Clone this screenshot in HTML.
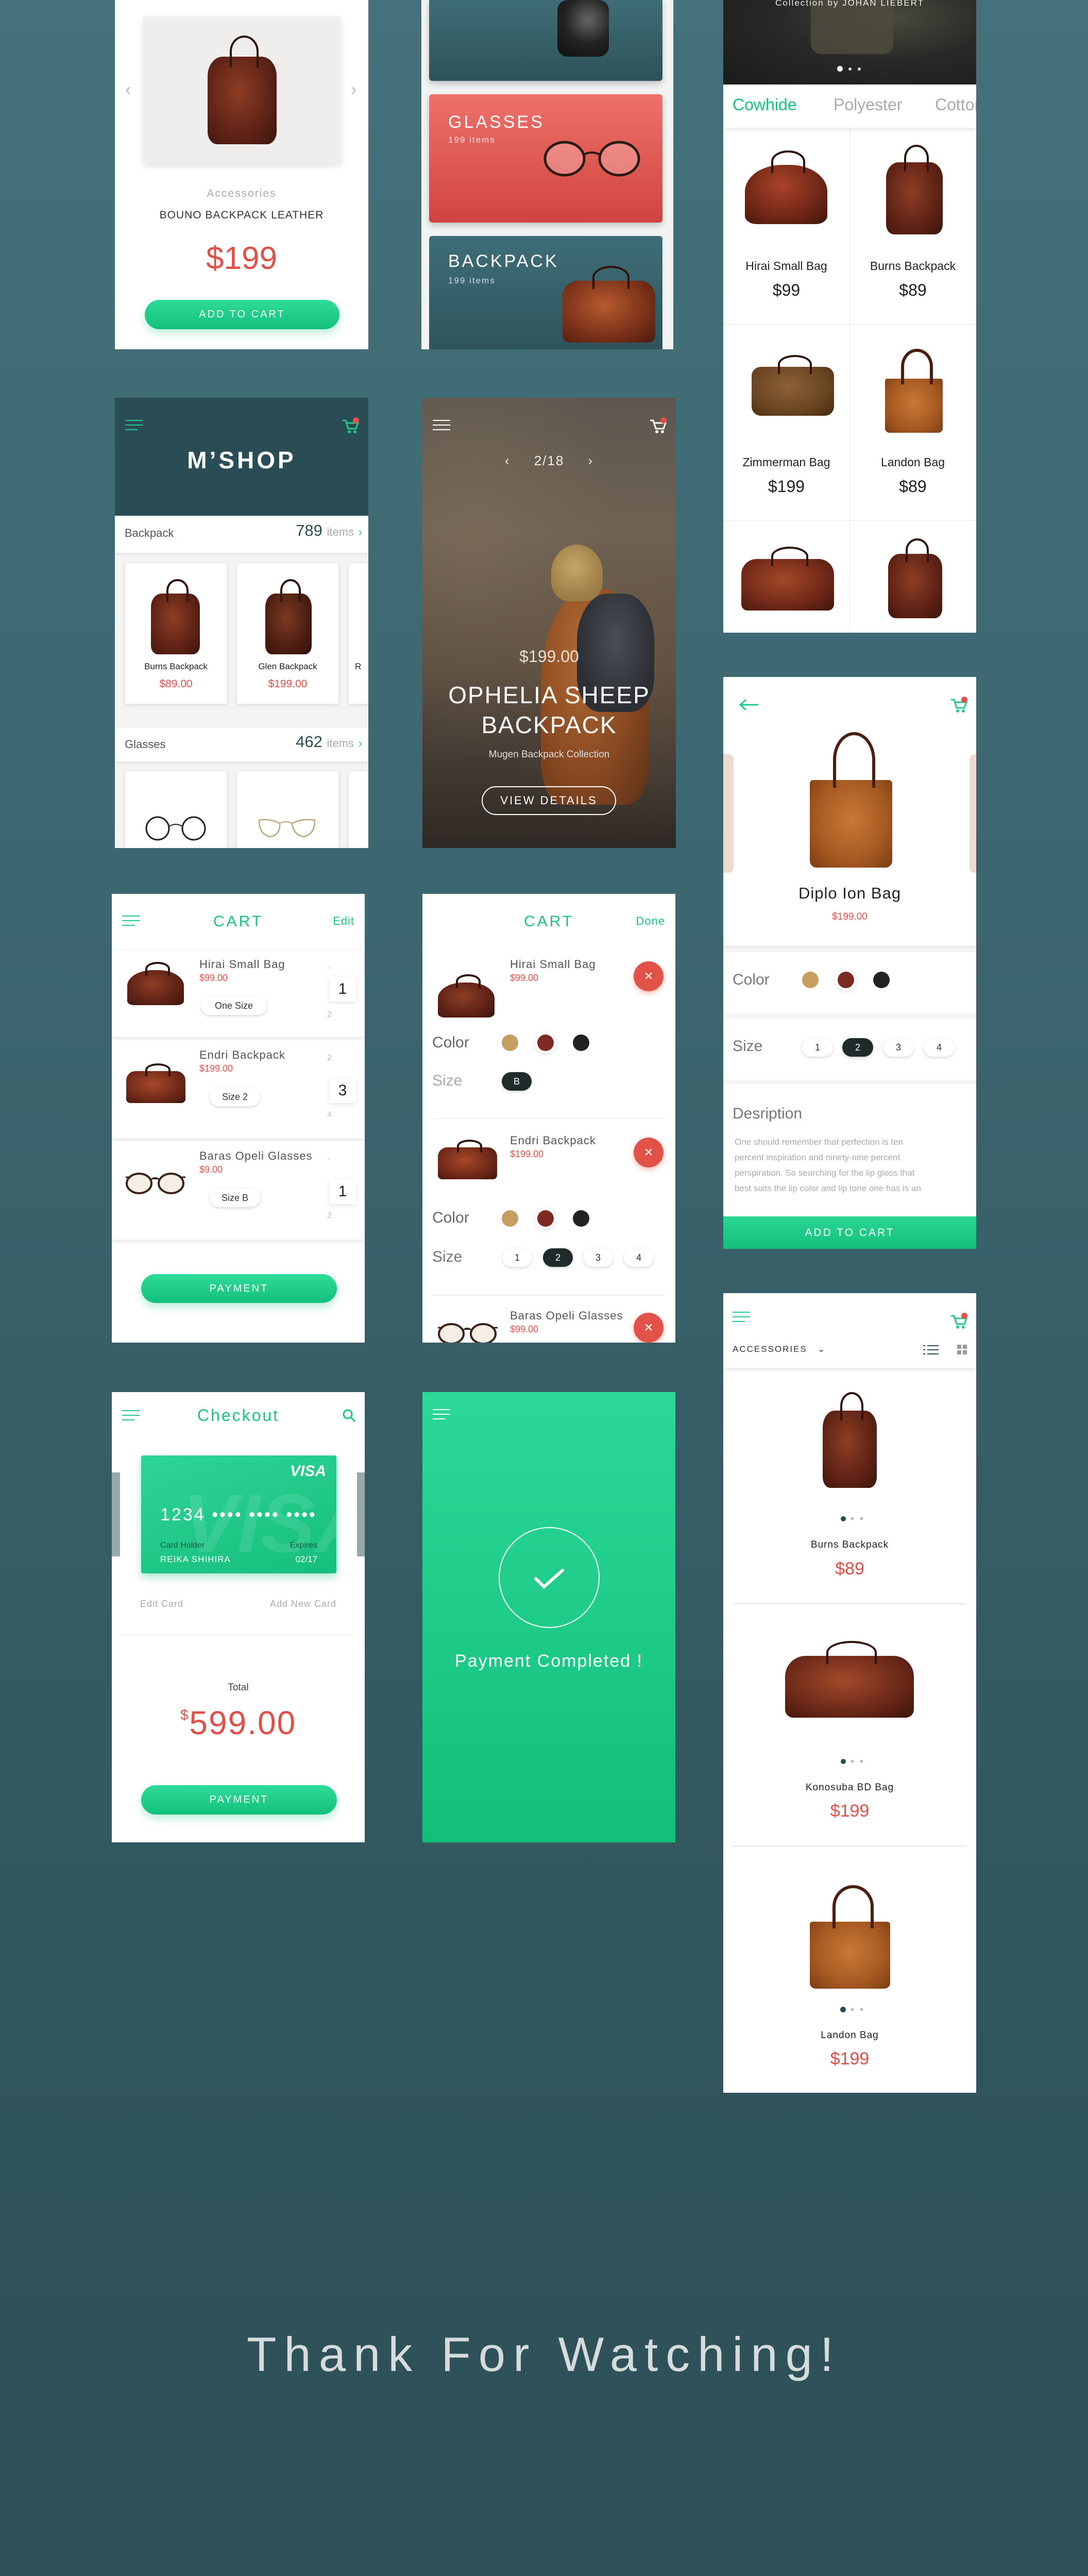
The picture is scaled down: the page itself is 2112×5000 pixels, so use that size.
<!DOCTYPE html>
<html><head><meta charset="utf-8">
<style>
*{margin:0;padding:0;box-sizing:border-box}
body{width:2112px;height:5000px;position:relative;overflow:hidden;font-family:"Liberation Sans",sans-serif;background:linear-gradient(180deg,#44717b 0%,#3c6670 35%,#33585f 70%,#2d4f58 100%)}
.p{position:absolute;background:#fff;overflow:hidden}
.t{position:absolute;white-space:nowrap}
.c{position:absolute;left:0;right:0;text-align:center;white-space:nowrap}
.bag{position:absolute;border-radius:22% 22% 14% 14%;background:radial-gradient(ellipse at 45% 40%,#8d3e24,#5e2216 60%,#3b150d)}
.bag:before{content:"";position:absolute;top:-24%;left:32%;width:36%;height:34%;border:4px solid #2e140c;border-bottom:none;border-radius:50% 50% 0 0}
.tote{position:absolute;border-radius:4% 4% 8% 8%;background:radial-gradient(ellipse at 50% 45%,#c77a35,#a65a22 60%,#7a3c15)}
.tote:before{content:"";position:absolute;top:-55%;left:28%;width:44%;height:60%;border:6px solid #4a1e10;border-bottom:none;border-radius:50% 50% 0 0}
.btn{position:absolute;border-radius:32px;background:linear-gradient(180deg,#2edb98,#12c07b);color:#fff;text-align:center;letter-spacing:3px;box-shadow:0 8px 16px rgba(30,200,130,.3)}
.hb{position:absolute;width:34px;height:22px}
.hb i{position:absolute;left:0;height:2px;background:#22c98c}
.hb i:nth-child(1){top:0;width:34px}.hb i:nth-child(2){top:9px;width:34px}.hb i:nth-child(3){top:18px;width:24px}
.pill{position:absolute;height:36px;border-radius:18px;background:#fff;box-shadow:0 2px 6px rgba(0,0,0,.18);text-align:center;line-height:36px;font-size:18px;color:#333}
.pill.d{background:#1f2a2a;color:#fff}
.sw{position:absolute;width:32px;height:32px;border-radius:50%}
.x{position:absolute;width:58px;height:58px;border-radius:50%;background:#e35249;color:#fff;text-align:center;line-height:58px;font-size:30px;box-shadow:0 4px 10px rgba(227,82,73,.4)}
.red{color:#e0504a}
.card{position:absolute;background:#fff;box-shadow:0 2px 8px rgba(0,0,0,.12)}
.dot{position:absolute;border-radius:50%}
</style></head><body>

<!-- Panel A -->
<div class="p" style="left:223px;top:0;width:492px;height:678px">
 <div style="position:absolute;left:55px;top:32px;width:383px;height:284px;background:#efeeec;box-shadow:0 6px 14px rgba(0,0,0,.12)"></div>
 <div class="bag" style="left:180px;top:110px;width:134px;height:170px"></div>
 <div class="t" style="left:20px;top:155px;font-size:34px;color:#bbb">‹</div>
 <div class="t" style="left:458px;top:155px;font-size:34px;color:#bbb">›</div>
 <div class="c" style="top:364px;font-size:21px;color:#aaa;letter-spacing:2px">Accessories</div>
 <div class="c" style="top:406px;font-size:21px;color:#333;letter-spacing:1px">BOUNO BACKPACK LEATHER</div>
 <div class="c red" style="top:466px;font-size:62px">$199</div>
 <div class="btn" style="left:58px;top:582px;width:378px;height:57px;line-height:57px;font-size:20px">ADD TO CART</div>
</div>

<!-- Panel B -->
<div class="p" style="left:818px;top:0;width:489px;height:678px;background:#f3f3f3">
 <div style="position:absolute;left:15px;top:0;width:453px;height:157px;border-radius:0 0 6px 6px;background:linear-gradient(180deg,#3f6d76,#2d5259);box-shadow:0 6px 12px rgba(0,0,0,.2)"></div>
 <div style="position:absolute;left:264px;top:0;width:100px;height:110px;border-radius:20px;background:radial-gradient(circle at 60% 35%,#666,#222 50%,#111)"></div>
 <div style="position:absolute;left:15px;top:183px;width:453px;height:249px;border-radius:6px;background:linear-gradient(180deg,#ee726a,#d0433e);box-shadow:0 6px 12px rgba(0,0,0,.2)"></div>
 <div class="t" style="left:52px;top:218px;font-size:34px;color:#fff;letter-spacing:4px">GLASSES</div>
 <div class="t" style="left:52px;top:262px;font-size:17px;color:#fde;letter-spacing:2px">199 items</div>
 <svg style="position:absolute;left:236px;top:270px" width="190" height="80"><ellipse cx="42" cy="38" rx="38" ry="32" fill="rgba(255,200,200,.4)" stroke="#2a1a14" stroke-width="5"/><ellipse cx="148" cy="38" rx="38" ry="32" fill="rgba(255,200,200,.4)" stroke="#2a1a14" stroke-width="5"/><path d="M80 30 Q95 22 110 30" stroke="#2a1a14" stroke-width="4" fill="none"/></svg>
 <div style="position:absolute;left:15px;top:458px;width:453px;height:240px;border-radius:6px;background:linear-gradient(180deg,#3f6e78,#2c525a)"></div>
 <div class="t" style="left:52px;top:488px;font-size:34px;color:#fff;letter-spacing:4px">BACKPACK</div>
 <div class="t" style="left:52px;top:535px;font-size:17px;color:#cde;letter-spacing:2px">199 items</div>
 <div class="bag" style="left:274px;top:545px;width:180px;height:120px;border-radius:30px 30px 14px 14px;background:radial-gradient(ellipse at 45% 40%,#b65a2e,#7a3119 60%,#4a1b0e)"></div>
</div>

<!-- Panel C -->
<div class="p" style="left:1404px;top:0;width:491px;height:1228px">
 <div style="position:absolute;left:0;top:0;width:491px;height:164px;background:radial-gradient(ellipse at 65% 20%,#4a4a3e,#2a2927 45%,#1b1b1b)"></div>
 <div style="position:absolute;left:170px;top:0;width:160px;height:105px;background:#4d4b3d;border-radius:0 0 20px 20px;opacity:.85"></div>
 <div class="c" style="top:-4px;font-size:17px;color:#eee;letter-spacing:2px">Collection by JOHAN LIEBERT</div>
 <div class="dot" style="left:221px;top:128px;width:11px;height:11px;background:#fff"></div>
 <div class="dot" style="left:243px;top:131px;width:6px;height:6px;background:#ddd"></div>
 <div class="dot" style="left:261px;top:131px;width:6px;height:6px;background:#ddd"></div>
 <div style="position:absolute;left:0;top:164px;width:491px;height:84px;background:#fff;box-shadow:0 4px 8px rgba(0,0,0,.1);z-index:2"></div>
 <div class="t" style="left:18px;top:185px;font-size:32px;color:#19c382;z-index:3">Cowhide</div>
 <div class="t" style="left:214px;top:185px;font-size:32px;color:#aaa;z-index:3">Polyester</div>
 <div class="t" style="left:411px;top:185px;font-size:32px;color:#aaa;z-index:3">Cotton</div>
 <div style="position:absolute;left:245px;top:248px;width:1px;height:980px;background:#e6e6e6"></div>
 <div style="position:absolute;left:0;top:629px;width:491px;height:1px;background:#e6e6e6"></div>
 <div style="position:absolute;left:0;top:1010px;width:491px;height:1px;background:#e6e6e6"></div>
 <div class="bag" style="left:42px;top:320px;width:160px;height:115px;border-radius:45% 45% 14% 14%;background:radial-gradient(ellipse at 45% 35%,#a9442a,#6f2616 60%,#3d140b)"></div>
 <div class="bag" style="left:316px;top:315px;width:110px;height:140px"></div>
 <div class="t" style="left:0;width:245px;text-align:center;top:503px;font-size:23px;color:#222">Hirai Small Bag</div>
 <div class="t" style="left:245px;width:246px;text-align:center;top:503px;font-size:23px;color:#222">Burns Backpack</div>
 <div class="t" style="left:0;width:245px;text-align:center;top:545px;font-size:32px;color:#222">$99</div>
 <div class="t" style="left:245px;width:246px;text-align:center;top:545px;font-size:32px;color:#222">$89</div>
 <div class="bag" style="left:55px;top:712px;width:160px;height:95px;border-radius:18px;background:radial-gradient(ellipse at 45% 40%,#8c6236,#6a4522 60%,#44290f)"></div>
 <div class="tote" style="left:314px;top:735px;width:112px;height:105px"></div>
 <div class="t" style="left:0;width:245px;text-align:center;top:884px;font-size:23px;color:#222">Zimmerman Bag</div>
 <div class="t" style="left:245px;width:246px;text-align:center;top:884px;font-size:23px;color:#222">Landon Bag</div>
 <div class="t" style="left:0;width:245px;text-align:center;top:926px;font-size:32px;color:#222">$199</div>
 <div class="t" style="left:245px;width:246px;text-align:center;top:926px;font-size:32px;color:#222">$89</div>
 <div class="bag" style="left:35px;top:1085px;width:180px;height:100px;border-radius:30px 30px 12px 12px;background:radial-gradient(ellipse at 45% 40%,#a5482a,#6f2818 60%,#3e150b)"></div>
 <div class="bag" style="left:320px;top:1075px;width:105px;height:125px"></div>
</div>

<!-- Panel D M'SHOP -->
<div class="p" style="left:223px;top:772px;width:492px;height:874px;background:#f4f4f4">
 <div style="position:absolute;left:0;top:0;width:492px;height:229px;background:#2a4d55"></div>
 <div class="hb" style="left:20px;top:43px"><i></i><i></i><i></i></div>
 <svg style="position:absolute;left:440px;top:38px" width="36" height="34"><path d="M2 6h6l5 16h15l4-11H10" stroke="#22c98c" stroke-width="3" fill="none"/><circle cx="15" cy="28" r="3" fill="#22c98c"/><circle cx="26" cy="28" r="3" fill="#22c98c"/><circle cx="28" cy="6" r="6" fill="#e3504a"/></svg>
 <div class="c" style="top:94px;font-size:46px;color:#fff;letter-spacing:5px;font-weight:bold">M’SHOP</div>
 <div style="position:absolute;left:0;top:229px;width:492px;height:72px;background:#fff;box-shadow:0 3px 6px rgba(0,0,0,.08)"></div>
 <div class="t" style="left:19px;top:250px;font-size:22px;color:#555">Backpack</div>
 <div class="t" style="right:12px;top:240px;font-size:31px;color:#2a4d55">789 <span style="font-size:22px;color:#aaa">items</span> <span style="font-size:22px;color:#22c98c">›</span></div>
 <div class="card" style="left:20px;top:321px;width:197px;height:273px"></div>
 <div class="bag" style="left:70px;top:380px;width:95px;height:118px"></div>
 <div class="t" style="left:20px;width:197px;text-align:center;top:512px;font-size:17px;color:#222">Burns Backpack</div>
 <div class="t red" style="left:20px;width:197px;text-align:center;top:544px;font-size:21px">$89.00</div>
 <div class="card" style="left:237px;top:321px;width:197px;height:273px"></div>
 <div class="bag" style="left:292px;top:380px;width:90px;height:118px;background:radial-gradient(ellipse at 45% 40%,#7a3a22,#4d1e12 60%,#2e0f08)"></div>
 <div class="t" style="left:237px;width:197px;text-align:center;top:512px;font-size:17px;color:#222">Glen Backpack</div>
 <div class="t red" style="left:237px;width:197px;text-align:center;top:544px;font-size:21px">$199.00</div>
 <div class="card" style="left:454px;top:321px;width:197px;height:273px"></div>
 <div class="t" style="left:466px;top:512px;font-size:17px;color:#222">R</div>
 <div style="position:absolute;left:0;top:640px;width:492px;height:66px;background:#fff;box-shadow:0 3px 6px rgba(0,0,0,.08)"></div>
 <div class="t" style="left:19px;top:660px;font-size:22px;color:#555">Glasses</div>
 <div class="t" style="right:12px;top:650px;font-size:31px;color:#2a4d55">462 <span style="font-size:22px;color:#aaa">items</span> <span style="font-size:22px;color:#22c98c">›</span></div>
 <div class="card" style="left:20px;top:725px;width:197px;height:200px"></div>
 <svg style="position:absolute;left:55px;top:810px" width="130" height="50"><circle cx="28" cy="26" r="22" fill="none" stroke="#222" stroke-width="3"/><circle cx="98" cy="26" r="22" fill="none" stroke="#222" stroke-width="3"/><path d="M50 22 Q63 14 76 22" stroke="#222" stroke-width="2" fill="none"/></svg>
 <div class="card" style="left:237px;top:725px;width:197px;height:200px"></div>
 <svg style="position:absolute;left:270px;top:808px" width="130" height="50"><path d="M10 12 Q30 8 50 18 Q52 40 32 44 Q10 40 10 12Z M74 18 Q94 8 118 12 Q118 40 96 44 Q76 40 74 18Z" fill="none" stroke="#b9a77a" stroke-width="2.5"/><path d="M50 18 Q62 12 74 18" stroke="#b9a77a" stroke-width="2" fill="none"/></svg>
 <div class="card" style="left:454px;top:725px;width:197px;height:200px"></div>
</div>

<!-- Panel E hero -->
<div class="p" style="left:820px;top:772px;width:492px;height:874px;background:linear-gradient(180deg,#5e574e 0%,#6e6253 30%,#5a4d40 60%,#3f3730 85%,#2e2824 100%)">
 <div style="position:absolute;left:0;top:0;width:492px;height:874px;background:radial-gradient(ellipse at 20% 30%,rgba(140,120,95,.35),transparent 50%),radial-gradient(ellipse at 80% 60%,rgba(120,95,70,.35),transparent 45%)"></div>
 <div style="position:absolute;left:230px;top:370px;width:210px;height:420px;border-radius:45% 45% 20% 20%;background:radial-gradient(ellipse at 40% 30%,#b06a32,#8a4a22 55%,#5a3018)"></div>
 <div style="position:absolute;left:300px;top:380px;width:150px;height:230px;border-radius:40% 40% 30% 30%;background:radial-gradient(ellipse at 50% 40%,#4a4e54,#2c3035 70%)"></div>
 <div style="position:absolute;left:250px;top:285px;width:100px;height:110px;border-radius:50% 50% 35% 35%;background:radial-gradient(circle at 45% 40%,#c7a568,#9a7c46 70%)"></div>
 <div class="hb" style="left:20px;top:43px"><i style="background:#fff"></i><i style="background:#fff"></i><i style="background:#fff;width:34px"></i></div>
 <svg style="position:absolute;left:440px;top:38px" width="36" height="34"><path d="M2 6h6l5 16h15l4-11H10" stroke="#fff" stroke-width="3" fill="none"/><circle cx="15" cy="28" r="3" fill="#fff"/><circle cx="26" cy="28" r="3" fill="#fff"/><circle cx="28" cy="6" r="6" fill="#e3504a"/></svg>
 <div class="c" style="top:107px;font-size:26px;color:#eee;letter-spacing:2px">‹ &nbsp;&nbsp;&nbsp; 2/18 &nbsp;&nbsp;&nbsp; ›</div>
 <div class="c" style="top:484px;font-size:32px;color:#e8e0d8">$199.00</div>
 <div class="c" style="top:550px;font-size:46px;color:#fff;letter-spacing:2px">OPHELIA SHEEP</div>
 <div class="c" style="top:608px;font-size:46px;color:#fff;letter-spacing:2px">BACKPACK</div>
 <div class="c" style="top:682px;font-size:19px;color:#ddd">Mugen Backpack Collection</div>
 <div style="position:absolute;left:115px;top:754px;width:261px;height:56px;border:2px solid #fff;border-radius:30px;color:#fff;text-align:center;line-height:52px;font-size:22px;letter-spacing:3px">VIEW DETAILS</div>
</div>

<!-- Panel F Diplo -->
<div class="p" style="left:1404px;top:1314px;width:491px;height:1110px;background:#f5f5f5">
 <div style="position:absolute;left:0;top:0;width:491px;height:522px;background:#fff;box-shadow:0 3px 6px rgba(0,0,0,.08)"></div>
 <svg style="position:absolute;left:30px;top:42px" width="40" height="24"><path d="M38 12H4M14 2L3 12l11 10" stroke="#22c98c" stroke-width="3" fill="none"/></svg>
 <svg style="position:absolute;left:440px;top:38px" width="36" height="34"><path d="M2 6h6l5 16h15l4-11H10" stroke="#22c98c" stroke-width="3" fill="none"/><circle cx="15" cy="28" r="3" fill="#22c98c"/><circle cx="26" cy="28" r="3" fill="#22c98c"/><circle cx="28" cy="6" r="6" fill="#e3504a"/></svg>
 <div class="tote" style="left:168px;top:200px;width:160px;height:170px"></div>
 <div style="position:absolute;left:-30px;top:150px;width:50px;height:230px;background:#e9d3c2;border-radius:10px;opacity:.8"></div>
 <div style="position:absolute;left:478px;top:150px;width:50px;height:230px;background:#e9d3c2;border-radius:10px;opacity:.8"></div>
 <div class="c" style="top:402px;font-size:31px;color:#222;letter-spacing:1px">Diplo Ion Bag</div>
 <div class="c red" style="top:455px;font-size:19px">$199.00</div>
 <div style="position:absolute;left:0;top:534px;width:491px;height:120px;background:#fff"></div>
 <div class="t" style="left:18px;top:571px;font-size:30px;color:#777">Color</div>
 <div class="sw" style="left:153px;top:572px;background:#c79e60"></div>
 <div class="sw" style="left:222px;top:572px;background:#7c2a22;box-shadow:0 0 0 5px #fff,0 2px 8px 5px rgba(0,0,0,.12)"></div>
 <div class="sw" style="left:291px;top:572px;background:#222"></div>
 <div style="position:absolute;left:0;top:662px;width:491px;height:120px;background:#fff"></div>
 <div class="t" style="left:18px;top:700px;font-size:30px;color:#777">Size</div>
 <div class="pill" style="left:153px;top:701px;width:60px">1</div>
 <div class="pill d" style="left:231px;top:701px;width:60px">2</div>
 <div class="pill" style="left:310px;top:701px;width:60px">3</div>
 <div class="pill" style="left:389px;top:701px;width:60px">4</div>
 <div style="position:absolute;left:0;top:790px;width:491px;height:260px;background:#fff"></div>
 <div class="t" style="left:18px;top:831px;font-size:30px;color:#777">Desription</div>
 <div class="t" style="left:22px;top:888px;font-size:17px;color:#aaa;line-height:30px">One should remember that perfection is ten<br>percent inspiration and ninety-nine percent<br>perspiration. So searching for the lip gloss that<br>best suits the lip color and lip tone one has is an</div>
 <div style="position:absolute;left:0;top:1047px;width:491px;height:63px;background:linear-gradient(180deg,#2bd594,#14c07b);color:#fff;text-align:center;line-height:63px;font-size:21px;letter-spacing:3px">ADD TO CART</div>
</div>

<!-- Panel G cart1 -->
<div class="p" style="left:217px;top:1735px;width:491px;height:871px;background:#fafafa">
 <div style="position:absolute;left:0;top:0;width:491px;height:105px;background:#fff"></div>
 <div class="hb" style="left:20px;top:42px"><i></i><i></i><i></i></div>
 <div class="c" style="top:37px;font-size:30px;color:#19c382;letter-spacing:4px">CART</div>
 <div class="t" style="right:20px;top:40px;font-size:22px;color:#19c382;letter-spacing:1px">Edit</div>
 <div style="position:absolute;left:0;top:110px;width:491px;height:168px;background:#fff;box-shadow:0 3px 6px rgba(0,0,0,.08)"></div>
 <div class="bag" style="left:30px;top:148px;width:110px;height:68px;border-radius:45% 45% 12% 12%"></div>
 <div class="t" style="left:170px;top:124px;font-size:22px;color:#555;letter-spacing:1px">Hirai Small Bag</div>
 <div class="t red" style="left:170px;top:153px;font-size:18px">$99.00</div>
 <div class="pill" style="left:173px;top:199px;width:128px">One Size</div>
 <div class="t" style="left:418px;top:135px;font-size:16px;color:#bbb">-</div>
 <div class="card" style="left:422px;top:161px;width:52px;height:48px;text-align:center;line-height:48px;font-size:30px;color:#222">1</div>
 <div class="t" style="left:418px;top:226px;font-size:16px;color:#bbb">2</div>
 <div style="position:absolute;left:0;top:283px;width:491px;height:192px;background:#fff;box-shadow:0 3px 6px rgba(0,0,0,.08)"></div>
 <div class="bag" style="left:28px;top:344px;width:115px;height:62px;border-radius:18px 18px 8px 8px;background:radial-gradient(ellipse at 45% 40%,#a5482a,#6f2818 60%,#3e150b)"></div>
 <div class="t" style="left:170px;top:300px;font-size:22px;color:#555;letter-spacing:1px">Endri Backpack</div>
 <div class="t red" style="left:170px;top:329px;font-size:18px">$199.00</div>
 <div class="pill" style="left:190px;top:376px;width:98px">Size 2</div>
 <div class="t" style="left:418px;top:310px;font-size:16px;color:#bbb">2</div>
 <div class="card" style="left:422px;top:358px;width:52px;height:48px;text-align:center;line-height:48px;font-size:30px;color:#222">3</div>
 <div class="t" style="left:418px;top:420px;font-size:16px;color:#bbb">4</div>
 <div style="position:absolute;left:0;top:479px;width:491px;height:192px;background:#fff;box-shadow:0 3px 6px rgba(0,0,0,.08)"></div>
 <svg style="position:absolute;left:25px;top:540px" width="120" height="46"><ellipse cx="28" cy="22" rx="24" ry="19" fill="rgba(220,200,170,.3)" stroke="#3a2218" stroke-width="4"/><ellipse cx="90" cy="22" rx="24" ry="19" fill="rgba(220,200,170,.3)" stroke="#3a2218" stroke-width="4"/><path d="M2 10h10M52 14q7-5 14 0M108 10h10" stroke="#3a2218" stroke-width="3"/></svg>
 <div class="t" style="left:170px;top:496px;font-size:22px;color:#555;letter-spacing:1px">Baras Opeli Glasses</div>
 <div class="t red" style="left:170px;top:525px;font-size:18px">$9.00</div>
 <div class="pill" style="left:190px;top:572px;width:98px">Size B</div>
 <div class="t" style="left:418px;top:506px;font-size:16px;color:#bbb">-</div>
 <div class="card" style="left:422px;top:554px;width:52px;height:48px;text-align:center;line-height:48px;font-size:30px;color:#222">1</div>
 <div class="t" style="left:418px;top:616px;font-size:16px;color:#bbb">2</div>
 <div style="position:absolute;left:0;top:680px;width:491px;height:191px;background:#fff"></div>
 <div class="btn" style="left:57px;top:738px;width:380px;height:56px;line-height:56px;font-size:20px">PAYMENT</div>
</div>

<!-- Panel H cart2 -->
<div class="p" style="left:820px;top:1735px;width:491px;height:871px">
 <div class="c" style="top:37px;font-size:30px;color:#19c382;letter-spacing:4px">CART</div>
 <div class="t" style="right:20px;top:40px;font-size:22px;color:#19c382;letter-spacing:1px">Done</div>
 <div class="bag" style="left:30px;top:172px;width:110px;height:68px;border-radius:45% 45% 12% 12%"></div>
 <div class="t" style="left:170px;top:124px;font-size:22px;color:#555;letter-spacing:1px">Hirai Small Bag</div>
 <div class="t red" style="left:170px;top:153px;font-size:18px">$99.00</div>
 <div class="x" style="left:410px;top:131px">×</div>
 <div class="t" style="left:19px;top:272px;font-size:30px;color:#666">Color</div>
 <div class="sw" style="left:154px;top:273px;background:#c79e60"></div>
 <div class="sw" style="left:223px;top:273px;background:#7c2a22;box-shadow:0 0 0 5px #fff,0 2px 8px 5px rgba(0,0,0,.12)"></div>
 <div class="sw" style="left:292px;top:273px;background:#222"></div>
 <div class="t" style="left:19px;top:346px;font-size:30px;color:#aaa">Size</div>
 <div class="pill d" style="left:154px;top:346px;width:58px">B</div>
 <div style="position:absolute;left:19px;top:436px;width:452px;height:1px;background:#e3e3e3"></div>
 <div class="bag" style="left:30px;top:492px;width:115px;height:62px;border-radius:18px 18px 8px 8px;background:radial-gradient(ellipse at 45% 40%,#a5482a,#6f2818 60%,#3e150b)"></div>
 <div class="t" style="left:170px;top:466px;font-size:22px;color:#555;letter-spacing:1px">Endri Backpack</div>
 <div class="t red" style="left:170px;top:495px;font-size:18px">$199.00</div>
 <div class="x" style="left:410px;top:473px">×</div>
 <div class="t" style="left:19px;top:612px;font-size:30px;color:#666">Color</div>
 <div class="sw" style="left:154px;top:614px;background:#c79e60"></div>
 <div class="sw" style="left:223px;top:614px;background:#7c2a22;box-shadow:0 0 0 5px #fff,0 2px 8px 5px rgba(0,0,0,.12)"></div>
 <div class="sw" style="left:292px;top:614px;background:#222"></div>
 <div class="t" style="left:19px;top:688px;font-size:30px;color:#777">Size</div>
 <div class="pill" style="left:155px;top:688px;width:58px">1</div>
 <div class="pill d" style="left:234px;top:688px;width:58px">2</div>
 <div class="pill" style="left:312px;top:688px;width:58px">3</div>
 <div class="pill" style="left:391px;top:688px;width:58px">4</div>
 <div style="position:absolute;left:19px;top:778px;width:452px;height:1px;background:#e3e3e3"></div>
 <svg style="position:absolute;left:28px;top:832px" width="120" height="46"><ellipse cx="28" cy="22" rx="24" ry="19" fill="rgba(220,200,170,.3)" stroke="#3a2218" stroke-width="4"/><ellipse cx="90" cy="22" rx="24" ry="19" fill="rgba(220,200,170,.3)" stroke="#3a2218" stroke-width="4"/><path d="M2 10h10M52 14q7-5 14 0M108 10h10" stroke="#3a2218" stroke-width="3"/></svg>
 <div class="t" style="left:170px;top:806px;font-size:22px;color:#555;letter-spacing:1px">Baras Opeli Glasses</div>
 <div class="t red" style="left:170px;top:835px;font-size:18px">$99.00</div>
 <div class="x" style="left:410px;top:813px">×</div>
</div>

<!-- Panel I checkout -->
<div class="p" style="left:217px;top:2702px;width:491px;height:874px">
 <div class="hb" style="left:20px;top:35px"><i></i><i></i><i></i></div>
 <div class="c" style="top:27px;font-size:32px;color:#19c382;letter-spacing:3px">Checkout</div>
 <svg style="position:absolute;left:448px;top:33px" width="26" height="26"><circle cx="10" cy="10" r="8" stroke="#19c382" stroke-width="3" fill="none"/><path d="M16 16l8 8" stroke="#19c382" stroke-width="3"/></svg>
 <div style="position:absolute;left:0;top:156px;width:16px;height:163px;background:#9aa7a9"></div>
 <div style="position:absolute;left:476px;top:156px;width:16px;height:163px;background:#9aa7a9"></div>
 <div style="position:absolute;left:57px;top:123px;width:379px;height:229px;border-radius:4px;background:linear-gradient(160deg,#2fd497,#15bf7d);box-shadow:0 8px 16px rgba(20,190,120,.35);overflow:hidden">
  <div class="t" style="left:80px;top:40px;font-size:160px;font-weight:bold;font-style:italic;color:rgba(255,255,255,.1)">VISA</div>
  <div class="t" style="right:20px;top:14px;font-size:30px;font-weight:bold;font-style:italic;color:#fff">VISA</div>
  <div class="t" style="left:37px;top:96px;font-size:34px;color:#fff;letter-spacing:3px">1234 •••• •••• ••••</div>
  <div class="t" style="left:37px;top:166px;font-size:16px;color:#1a5a40">Card Holder</div>
  <div class="t" style="left:37px;top:192px;font-size:17px;color:#fff;letter-spacing:1px">REIKA SHIHIRA</div>
  <div class="t" style="right:37px;top:166px;font-size:16px;color:#1a5a40">Expires</div>
  <div class="t" style="right:37px;top:192px;font-size:17px;color:#fff">02/17</div>
 </div>
 <div class="t" style="left:55px;top:401px;font-size:18px;color:#aaa;letter-spacing:1px">Edit Card</div>
 <div class="t" style="right:55px;top:401px;font-size:18px;color:#aaa;letter-spacing:1px">Add New Card</div>
 <div style="position:absolute;left:19px;top:471px;width:452px;height:1px;background:#e6e6e6"></div>
 <div class="c" style="top:563px;font-size:19px;color:#444">Total</div>
 <div class="c red" style="top:605px;font-size:64px;letter-spacing:2px"><span style="font-size:28px;vertical-align:28px">$</span>599.00</div>
 <div class="btn" style="left:57px;top:763px;width:380px;height:57px;line-height:57px;font-size:20px">PAYMENT</div>
</div>

<!-- Panel J payment -->
<div class="p" style="left:820px;top:2702px;width:491px;height:874px;background:linear-gradient(180deg,#2cd898,#11bf7a)">
 <div class="hb" style="left:20px;top:33px"><i style="background:#fff"></i><i style="background:#fff"></i><i style="background:#fff"></i></div>
 <div style="position:absolute;left:148px;top:262px;width:196px;height:196px;border:2px solid #fff;border-radius:50%"></div>
 <svg style="position:absolute;left:216px;top:340px" width="60" height="44"><path d="M4 22l16 16L56 6" stroke="#fff" stroke-width="6" fill="none" stroke-linecap="round"/></svg>
 <div class="c" style="top:503px;font-size:34px;color:#fff;letter-spacing:2px">Payment Completed !</div>
</div>

<!-- Panel K list -->
<div class="p" style="left:1404px;top:2510px;width:491px;height:1552px">
 <div style="position:absolute;left:0;top:0;width:491px;height:145px;background:#fff;box-shadow:0 4px 8px rgba(0,0,0,.1);z-index:2"></div>
 <div class="hb" style="left:18px;top:36px;z-index:3"><i></i><i></i><i></i></div>
 <svg style="position:absolute;left:440px;top:38px;z-index:3" width="36" height="34"><path d="M2 6h6l5 16h15l4-11H10" stroke="#22c98c" stroke-width="3" fill="none"/><circle cx="15" cy="28" r="3" fill="#22c98c"/><circle cx="26" cy="28" r="3" fill="#22c98c"/><circle cx="28" cy="6" r="6" fill="#e3504a"/></svg>
 <div class="t" style="left:18px;top:99px;font-size:17px;color:#333;letter-spacing:2px;z-index:3">ACCESSORIES &nbsp;&nbsp;⌄</div>
 <svg style="position:absolute;left:388px;top:100px;z-index:3" width="30" height="20"><path d="M0 2h4M8 2h22M0 10h4M8 10h22M0 18h4M8 18h22" stroke="#2a4d55" stroke-width="2"/></svg>
 <svg style="position:absolute;left:454px;top:100px;z-index:3" width="20" height="20"><rect x="0" y="0" width="8" height="8" fill="#999"/><rect x="11" y="0" width="8" height="8" fill="#999"/><rect x="0" y="11" width="8" height="8" fill="#999"/><rect x="11" y="11" width="8" height="8" fill="#999"/></svg>
 <div class="bag" style="left:193px;top:228px;width:105px;height:150px"></div>
 <div class="dot" style="left:228px;top:433px;width:10px;height:10px;background:#2a4d55"></div>
 <div class="dot" style="left:248px;top:435px;width:5px;height:5px;background:#aaa"></div>
 <div class="dot" style="left:266px;top:435px;width:5px;height:5px;background:#aaa"></div>
 <div class="c" style="top:478px;font-size:19px;color:#222;letter-spacing:1px">Burns Backpack</div>
 <div class="c red" style="top:516px;font-size:34px">$89</div>
 <div style="position:absolute;left:19px;top:602px;width:453px;height:2px;background:#e6e6e6"></div>
 <div class="bag" style="left:120px;top:704px;width:250px;height:120px;border-radius:40px 40px 16px 16px;background:radial-gradient(ellipse at 45% 40%,#a34a2a,#6a2818 60%,#3a140a)"></div>
 <div class="dot" style="left:228px;top:904px;width:10px;height:10px;background:#2a4d55"></div>
 <div class="dot" style="left:248px;top:906px;width:5px;height:5px;background:#aaa"></div>
 <div class="dot" style="left:266px;top:906px;width:5px;height:5px;background:#aaa"></div>
 <div class="c" style="top:949px;font-size:19px;color:#222;letter-spacing:1px">Konosuba BD Bag</div>
 <div class="c red" style="top:986px;font-size:34px">$199</div>
 <div style="position:absolute;left:19px;top:1072px;width:453px;height:2px;background:#e6e6e6"></div>
 <div class="tote" style="left:168px;top:1220px;width:156px;height:130px"></div>
 <div class="dot" style="left:227px;top:1385px;width:11px;height:11px;background:#2a4d55"></div>
 <div class="dot" style="left:248px;top:1388px;width:5px;height:5px;background:#aaa"></div>
 <div class="dot" style="left:266px;top:1388px;width:5px;height:5px;background:#aaa"></div>
 <div class="c" style="top:1430px;font-size:19px;color:#222;letter-spacing:1px">Landon Bag</div>
 <div class="c red" style="top:1467px;font-size:34px">$199</div>
</div>

<div class="c" style="top:4515px;font-size:94px;color:#d6dcdd;letter-spacing:15px;line-height:110px">Thank For Watching!</div>
</body></html>
